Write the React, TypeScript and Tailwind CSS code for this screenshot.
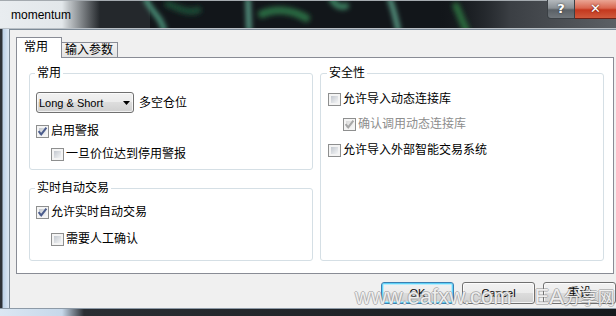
import type { ReactNode } from 'react'

const ui = "font-['Liberation_Sans','Noto_Sans_CJK_SC',sans-serif] text-[12px] leading-[14px]"

function TitleBackdrop() {
  return (
    <svg className="absolute inset-0" width="616" height="29" viewBox="0 0 616 29">
      <defs>
        <linearGradient id="glow" x1="0" x2="1" y1="0" y2="0">
          <stop offset="0" stopColor="#e9edf0" />
          <stop offset="0.62" stopColor="#e2e7ea" />
          <stop offset="1" stopColor="#e2e7ea" stopOpacity="0" />
        </linearGradient>
        <linearGradient id="haze" x1="0" x2="1" y1="0" y2="0">
          <stop offset="0" stopColor="#1a1e22" stopOpacity="0" />
          <stop offset="0.4" stopColor="#3b3f44" />
          <stop offset="1" stopColor="#5c6065" />
        </linearGradient>
        <filter id="soft" x="-20%" y="-50%" width="140%" height="200%">
          <feGaussianBlur stdDeviation="2.5" />
        </filter>
      </defs>
      <rect width="616" height="29" fill="#12161a" />
      <rect x="70" width="80" height="29" fill="#24282c" />
      <rect x="440" width="176" height="29" fill="url(#haze)" />
      <g filter="url(#soft)" fill="none" strokeLinecap="round">
        <path d="M146 0 C150 8 156 14 160 20 L164 29" stroke="#4f9a80" strokeWidth="5" />
        <path d="M168 4 C178 8 188 14 198 10" stroke="#1f4a34" strokeWidth="7" />
        <path d="M248 0 L249 29" stroke="#5c9f8a" strokeWidth="5" />
        <path d="M262 14 C276 8 292 10 306 18" stroke="#2b6b42" strokeWidth="8" />
        <path d="M332 0 C336 6 342 8 346 6" stroke="#3c8262" strokeWidth="6" />
        <path d="M390 0 C394 10 396 20 398 29" stroke="#5a9c86" strokeWidth="5" />
        <path d="M456 6 C460 14 462 22 466 29" stroke="#2c6a3c" strokeWidth="7" />
      </g>
      <rect width="100" height="29" fill="url(#glow)" />
      <rect width="616" height="1" fill="#a4aaaf" />
      <rect y="28" width="616" height="1" fill="#b9c0c6" />
    </svg>
  )
}

function Box({ checked, disabled }: { checked?: boolean; disabled?: boolean }) {
  return (
    <span className="relative flex h-[13px] w-[13px] shrink-0 border border-[#8e8f8f] bg-[#f4f4f4] p-[2px]">
      <span
        className={
          disabled
            ? 'flex-1 bg-[linear-gradient(135deg,#dadada,#f6f6f6)]'
            : 'flex-1 bg-[linear-gradient(135deg,#c3c8cf,#f4f5f6)]'
        }
      />
      {checked && (
        <svg className="absolute inset-0" width="11" height="11" viewBox="0 0 11 11">
          <path
            d="M1.6 5.2 L4.2 8.4 L9.4 1.6"
            fill="none"
            stroke={disabled ? '#a7a7a7' : '#4b5c8c'}
            strokeWidth="2"
          />
        </svg>
      )}
    </span>
  )
}

function Check({
  label,
  checked,
  disabled,
  indent,
}: {
  label: string
  checked?: boolean
  disabled?: boolean
  indent?: boolean
}) {
  return (
    <div className={indent ? 'flex h-[16px] items-center gap-[2px] pl-[15px]' : 'flex h-[16px] items-center gap-[2px]'}>
      <Box checked={checked} disabled={disabled} />
      <span className={disabled ? 'text-[#8d8d8d]' : 'text-black'}>{label}</span>
    </div>
  )
}

function Btn({ children, primary }: { children: ReactNode; primary?: boolean }) {
  return (
    <button
      className={
        primary
          ? 'flex h-[22px] w-[73px] items-center justify-center rounded-[3px] border border-[#3c7fb1] bg-[linear-gradient(#f2f2f2_0%,#ebebeb_50%,#dddddd_50%,#cfcfcf_100%)] text-[11px] text-black shadow-[inset_0_0_0_1px_#5fd2f8,inset_0_0_0_2px_#b8ecfd]'
          : 'flex h-[22px] w-[73px] items-center justify-center rounded-[3px] border border-[#707070] bg-[linear-gradient(#f2f2f2_0%,#ebebeb_50%,#dddddd_50%,#cfcfcf_100%)] text-[11px] text-black shadow-[inset_0_0_0_1px_rgba(255,255,255,0.75)]'
      }
    >
      {children}
    </button>
  )
}

export default function App() {
  return (
    <div className={`relative h-[316px] w-[616px] overflow-hidden bg-[#1b1e22] ${ui}`}>
      {/* title bar */}
      <div className="relative flex h-[29px]">
        <TitleBackdrop />
        <span className="relative pl-[11px] pt-[8px] font-['Liberation_Sans',sans-serif] text-[12px] text-black">
          momentum
        </span>
        <div className="relative ml-auto flex h-[19px]">
          <div className="flex w-[28px] items-center justify-center rounded-bl-[4px] border border-t-0 border-[#3b4045] bg-[linear-gradient(#b4b9bd,#8a9095_45%,#5a6066_55%,#70767b)] font-['DejaVu_Sans',sans-serif] text-[13px] font-bold text-white [text-shadow:0_0_2px_#222]">
            ?
          </div>
          <div className="flex w-[41px] items-center justify-center border-b border-[#6b2015] bg-[linear-gradient(#eaa594,#d9664f_45%,#c4381e_55%,#d0593c)] font-['DejaVu_Sans',sans-serif] text-[13px] font-bold text-white [text-shadow:0_0_2px_#4a0f05]">
            ✕
          </div>
        </div>
      </div>

      {/* window body */}
      <div className="flex h-[279px]">
        <div className="w-[9px] bg-[linear-gradient(90deg,#2e3238_0px,#2e3238_2px,#bcd1e7_3px,#dde8f4_9px)]" />
        <div className="flex flex-1 flex-col overflow-hidden border-l border-t border-[#7d8b98] bg-[#f0f0f0] pl-[6px] pt-[7px]">
          {/* tabs */}
          <div className="flex items-end">
            <div className="relative z-10 -mb-px h-[21px] w-[46px] border border-b-0 border-[#898c95] bg-white pl-[7px] pt-[2px]">
              常用
            </div>
            <div className="-ml-px h-[15px] w-[57px] border border-b-0 border-[#898c95] bg-[linear-gradient(#f3f3f3,#e3e3e3)] pl-[3px]">
              输入参数
            </div>
          </div>

          {/* tab page */}
          <div className="flex h-[217px] w-[598px] gap-[7px] border border-[#898c95] bg-white pb-[12px] pl-[12px] pr-[9px] pt-[8px]">
            <div className="flex w-[284px] flex-col gap-[11px]">
              <fieldset className="rounded-[3px] border border-[#d5dfe5] px-[6px] pb-[7px] pt-[12px]">
                <legend className="ml-[-1px] px-[2px]">常用</legend>
                <div className="flex items-center gap-[5px]">
                  <div className="flex h-[21px] w-[98px] items-center justify-between rounded-[3px] border border-[#707070] bg-[linear-gradient(#f2f2f2_0%,#ebebeb_50%,#dddddd_50%,#cfcfcf_100%)] pl-[2px] pr-[3px] font-['Liberation_Sans',sans-serif] text-[11px] shadow-[inset_0_0_0_1px_rgba(255,255,255,0.7)]">
                    <span>Long &amp; Short</span>
                    <svg width="7" height="4" viewBox="0 0 7 4">
                      <path d="M0 0H7L3.5 4Z" fill="#000" />
                    </svg>
                  </div>
                  <span>多空仓位</span>
                </div>
                <div className="mt-[10px]">
                  <Check label="启用警报" checked />
                </div>
                <div className="mt-[7px]">
                  <Check label="一旦价位达到停用警报" indent />
                </div>
              </fieldset>

              <fieldset className="flex-1 rounded-[3px] border border-[#d5dfe5] px-[6px] pt-[9px]">
                <legend className="ml-[-1px] px-[2px]">实时自动交易</legend>
                <Check label="允许实时自动交易" checked />
                <div className="mt-[11px]">
                  <Check label="需要人工确认" indent />
                </div>
              </fieldset>
            </div>

            <fieldset className="w-[284px] rounded-[3px] border border-[#d5dfe5] px-[7px] pt-[11px]">
              <legend className="ml-[-1px] px-[2px]">安全性</legend>
              <Check label="允许导入动态连接库" />
              <div className="mt-[9px]">
                <Check label="确认调用动态连接库" checked disabled indent />
              </div>
              <div className="mt-[10px]">
                <Check label="允许导入外部智能交易系统" />
              </div>
            </fieldset>
          </div>

          {/* dialog buttons */}
          <div className="mt-[8px] flex justify-end gap-[8px] font-['Liberation_Sans','Noto_Sans_CJK_SC',sans-serif]">
            <Btn primary>OK</Btn>
            <Btn>Cancel</Btn>
            <Btn>
              <span className="text-[12px]">重设</span>
            </Btn>
          </div>
        </div>
      </div>

      {/* bottom frame edge */}
      <div className="h-[8px] border-t border-[#8d9aa7] bg-[linear-gradient(90deg,#dbe7f3_0px,#c6d8ea_62px,#2a2e33_84px,#16191c_100%)]" />

      {/* watermark */}
      <div className="pointer-events-none absolute left-[355px] top-[286px] flex items-baseline gap-[23px] font-['Liberation_Sans','Noto_Sans_CJK_SC',sans-serif] text-[22px] leading-[22px] text-white/85 [text-shadow:1px_0_0_rgba(120,120,120,0.45),-1px_0_0_rgba(120,120,120,0.45),0_1px_0_rgba(120,120,120,0.45),0_-1px_0_rgba(120,120,120,0.45)]">
        <span>www.eafxw.com</span>
        <span>
          EA<span className="text-[17px]">分享网</span>
        </span>
      </div>
    </div>
  )
}
